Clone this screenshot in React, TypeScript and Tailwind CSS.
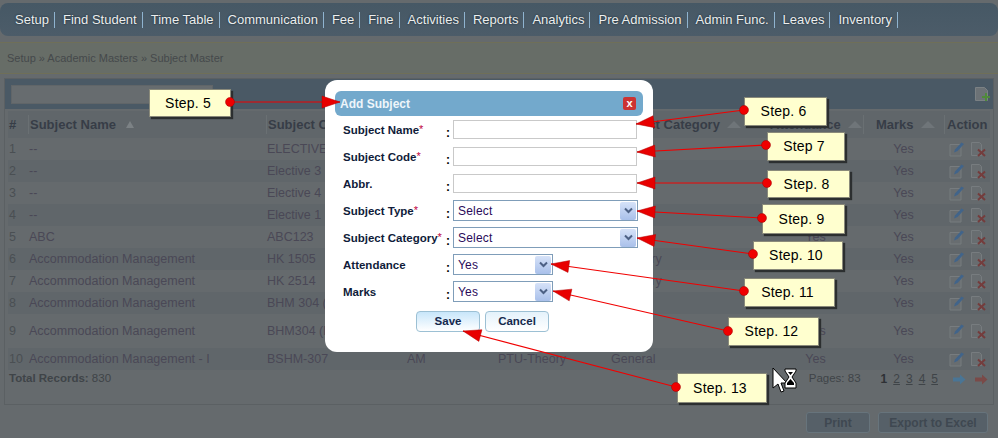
import React from "react";

const navItems = ["Setup", "Find Student", "Time Table", "Communication", "Fee", "Fine", "Activities", "Reports", "Analytics", "Pre Admission", "Admin Func.", "Leaves", "Inventory"];

const rows = [
  { n: "1", name: "--", code: "ELECTIVE", abbr: "", type: "", cat: "", att: "", h: "h-[22px]" },
  { n: "2", name: "--", code: "Elective 3", abbr: "", type: "", cat: "", att: "", h: "h-[22px]" },
  { n: "3", name: "--", code: "Elective 4", abbr: "", type: "", cat: "", att: "", h: "h-[22px]" },
  { n: "4", name: "--", code: "Elective 1", abbr: "", type: "", cat: "", att: "", h: "h-[22px]" },
  { n: "5", name: "ABC", code: "ABC123", abbr: "", type: "", cat: "", att: "Yes", h: "h-[22px]" },
  { n: "6", name: "Accommodation Management", code: "HK 1505", abbr: "", type: "", cat: "Category", att: "", h: "h-[22px]" },
  { n: "7", name: "Accommodation Management", code: "HK 2514", abbr: "", type: "", cat: "Category", att: "", h: "h-[22px]" },
  { n: "8", name: "Accommodation Management", code: "BHM 304 (", abbr: "", type: "", cat: "", att: "", h: "h-[22px]" },
  { n: "9", name: "Accommodation Management", code: "BHM304 (F", abbr: "", type: "", cat: "", att: "Yes", h: "h-[34px]" },
  { n: "10", name: "Accommodation Management - I", code: "BSHM-307", abbr: "AM", type: "PTU-Theory", cat: "General", att: "Yes", h: "h-[22px]" },
];

const callouts = [
  { label: "Step. 5", box: "left-[149px] top-[89px] w-[82px] h-[28px]" },
  { label: "Step. 6", box: "left-[744px] top-[97px] w-[83px] h-[29px]" },
  { label: "Step 7", box: "left-[767px] top-[132px] w-[78px] h-[29px]" },
  { label: "Step. 8", box: "left-[767px] top-[170px] w-[83px] h-[28px]" },
  { label: "Step. 9", box: "left-[762px] top-[204px] w-[83px] h-[30px]" },
  { label: "Step. 10", box: "left-[753px] top-[241px] w-[90px] h-[29px]" },
  { label: "Step. 11", box: "left-[744px] top-[278px] w-[91px] h-[29px]" },
  { label: "Step. 12", box: "left-[728px] top-[317px] w-[91px] h-[29px]" },
  { label: "Step. 13", box: "left-[677px] top-[373px] w-[90px] h-[30px]" },
];

// dot x, dot y, tip x, tip y
const arrows = [
  [230, 102, 340, 102],
  [744, 110, 636, 124],
  [766, 145, 637, 152],
  [767, 183, 637, 183],
  [762, 218, 637, 211],
  [753, 254, 637, 238],
  [744, 291, 551, 264],
  [728, 331, 553, 291],
  [676, 387, 463, 331],
];

function Arrow({ a }: { a: number[] }) {
  const [x1, y1, x2, y2] = a;
  const len = Math.hypot(x1 - x2, y1 - y2);
  const ux = (x1 - x2) / len;
  const uy = (y1 - y2) / len;
  const bx = x2 + ux * 18;
  const by = y2 + uy * 18;
  const pts = `${x2},${y2} ${bx - uy * 6},${by + ux * 6} ${bx + uy * 6},${by - ux * 6}`;
  return (
    <g>
      <line x1={x1} y1={y1} x2={x2} y2={y2} stroke="#f00000" strokeWidth="1.2" />
      <polygon points={pts} fill="#e80000" stroke="#b00000" strokeWidth="0.5" />
      <circle cx={x1} cy={y1} r="4.5" fill="#f00000" stroke="#a00000" strokeWidth="0.5" />
    </g>
  );
}

function EditIcon() {
  return (
    <svg width="16" height="16" viewBox="0 0 16 16">
      <path d="M1 3.500h11v11.500h-11z" fill="#686d70" stroke="#777c7f" />
      <path d="M5 11.500l1-3 6.500-7 2.500 1.500-6.500 7z" fill="#41648a" />
    </svg>
  );
}

function DeleteIcon() {
  return (
    <svg width="16" height="16" viewBox="0 0 16 16">
      <path d="M1.500 1.500h8l2 2v11h-10z" fill="#686d70" stroke="#777c7f" />
      <path d="M8 8.500l7 6.500M15 8.500l-7 6.500" stroke="#743c3c" strokeWidth="2" />
    </svg>
  );
}

function PageArrow({ color }: { color: string }) {
  return (
    <svg width="13" height="11" viewBox="0 0 13 11">
      <path d="M0 3.500h7v-3l5.500 5-5.500 5v-3h-7z" fill={color} />
    </svg>
  );
}

function SortMark() {
  return <span className="ml-[7px] inline-block border-x-[7px] border-b-[7px] border-x-transparent border-b-[#6f7579]" />;
}

function Chevron() {
  return (
    <span className="flex h-[18px] w-[16px] items-center justify-center rounded-[2px] bg-gradient-to-b from-[#d6e2f8] to-[#a9c0ea]">
      <svg width="9" height="7" viewBox="0 0 9 7">
        <path d="M1 1.500l3.500 3.500L8 1.500" fill="none" stroke="#4d6185" strokeWidth="2" />
      </svg>
    </span>
  );
}

function FieldLabel({ text, required }: { text: string; required?: boolean }) {
  return (
    <div className="flex w-[102px] items-start whitespace-nowrap text-[11.5px] font-bold leading-[14px] text-[#101c3a]">
      {text}
      {required && <span className="text-[11px] font-normal leading-[12px] text-[#c00040]">*</span>}
    </div>
  );
}

function TextRow({ label, required }: { label: string; required?: boolean }) {
  return (
    <div className="flex h-[27px] items-start pl-[18px]">
      <div className="mt-[3px]"><FieldLabel text={label} required={required} /></div>
      <span className="mt-[6px] w-[7px] pl-[1px] text-[12px] font-bold leading-[14px] text-black">:</span>
      <div className="ml-[1px] h-[19px] w-[184px] border border-[#c9c9c9] bg-white" />
    </div>
  );
}

function SelectRow({ label, value, required, small }: { label: string; value: string; required?: boolean; small?: boolean }) {
  return (
    <div className="flex h-[27px] items-start pl-[18px]">
      <div className="mt-[3px]"><FieldLabel text={label} required={required} /></div>
      <span className="mt-[6px] w-[7px] pl-[1px] text-[12px] font-bold leading-[14px] text-black">:</span>
      <div className={`-mt-[1px] ml-[1px] flex h-[21px] items-center justify-between border border-[#7f9db9] bg-white pl-[4px] pr-[1px] text-[12px] tracking-[0.2px] text-[#2a0a5a] ${small ? "w-[100px]" : "w-[185px]"}`}>
        {value}
        <Chevron />
      </div>
    </div>
  );
}

export default function App() {
  return (
    <div className="relative h-[438px] w-[998px] overflow-hidden bg-[#656a6d] font-['Liberation_Sans',Arial,sans-serif]">
      <nav className="mt-[3px] flex h-[33px] items-center rounded-[8px] bg-gradient-to-b from-[#465865] to-[#4c5c69] pl-[7px] text-[13px] text-[#eceeee] [text-shadow:0_0_2px_#10202c]">
        {navItems.map((item) => (
          <span key={item} className="h-[16px] border-r border-[#8fb3cf] pl-[8px] pr-[5px] leading-[16px]">{item}</span>
        ))}
      </nav>

      <div className="mt-[6px] flex h-[32px] items-center border-y border-[#6f6f58] bg-[#676d67] pl-[7px] text-[11px] text-[#45494b]">
        Setup » Academic Masters » Subject Master
      </div>

      <section className="mx-[4px] mt-[4px] h-[327px] border border-[#5b6063]">
        <div className="flex h-[30px] items-center justify-between bg-[#4a5965] pl-[6px] pr-[3px]">
          <div className="h-[19px] w-[202px] border border-[#606568] bg-[#676c6f]" />
          <svg width="16" height="16" viewBox="0 0 16 16">
            <path d="M1.500 1.500h9l3 3v10h-12z" fill="#6c7276" stroke="#7b8184" />
            <path d="M12 7v8M8 11h8" stroke="#4f8a3a" strokeWidth="2" />
          </svg>
        </div>

        <div className="mx-[3px] mt-[2px]">
          <div className="flex h-[27px] items-center bg-[#60666a] text-[13px] font-bold text-[#373d47]">
            <div className="w-[20px] pl-[1px]">#</div>
            <div className="flex w-[238px] items-center border-l border-[#6a7073] pl-[1px]">
              Subject Name
              <span className="ml-[10px] inline-block border-x-[4px] border-b-[7px] border-x-transparent border-b-[#7c8285]" />
            </div>
            <div className="w-[139px] border-l border-[#6a7073] pl-[1px]">Subject Code</div>
            <div className="w-[92px]" />
            <div className="w-[113px]" />
            <div className="flex w-[158px] items-center whitespace-nowrap pl-[3px]">Subject Category<SortMark /></div>
            <div className="flex w-[95px] items-center pl-[2px]">Attendance<SortMark /></div>
            <div className="flex w-[81px] items-center border-l border-[#6a7073] pl-[12px]">Marks<SortMark /></div>
            <div className="border-l border-[#6a7073] pl-[2px]">Action</div>
          </div>

          {rows.map((r, i) => (
            <div key={r.n} className={`flex items-center text-[12.5px] text-[#4a4856] ${r.h} ${i % 2 === 0 ? "" : "bg-[#60666a]"}`}>
              <div className="w-[20px] pl-[1px] text-[#4a4f53]">{r.n}</div>
              <div className="w-[238px] pl-[1px]">{r.name}</div>
              <div className="w-[139px] pl-[1px]">{r.code}</div>
              <div className="w-[92px] pl-[2px]">{r.abbr}</div>
              <div className="w-[113px] pl-[1px]">{r.type}</div>
              <div className="w-[158px] pl-[1px]">{r.cat}</div>
              <div className="w-[95px] text-center">{r.att}</div>
              <div className="w-[81px] text-center">Yes</div>
              <div className="flex gap-[5px] pl-[5px]"><EditIcon /><DeleteIcon /></div>
            </div>
          ))}

          <div className="flex h-[18px] items-center justify-between text-[11.5px] text-[#3f4448]">
            <div className="pl-[1px]"><b>Total Records:</b> 830</div>
            <div className="flex items-center pr-[2px]">
              <span>Pages: 83</span>
              <span className="ml-[20px] flex gap-[6px] text-[12px]">
                <span className="font-bold text-[#2e3135]">1</span>
                {["2", "3", "4", "5"].map((p) => <span key={p} className="underline">{p}</span>)}
              </span>
              <span className="ml-[15px]"><PageArrow color="#4a7595" /></span>
              <span className="ml-[9px]"><PageArrow color="#7a4a48" /></span>
            </div>
          </div>
        </div>
      </section>

      <div className="mt-[7px] flex justify-end gap-[8px] pr-[10px] text-[12px] font-bold text-[#3f4851]">
        <div className="flex h-[21px] w-[64px] items-center justify-center rounded-[3px] border border-[#67747c] bg-[#566068]">Print</div>
        <div className="flex h-[21px] w-[110px] items-center justify-center rounded-[3px] border border-[#67747c] bg-[#566068]">Export to Excel</div>
      </div>

      {/* popup */}
      <div className="absolute left-[325px] top-[80px] h-[272px] w-[328px] rounded-[12px] bg-white pt-[11px]">
        <div className="mx-[10px] mb-[4px] flex h-[25px] items-center justify-between rounded-[6px] bg-[#73a9cc] pl-[5px] pr-[7px] text-[12px] font-bold text-[#eef5fa]">
          Add Subject
          <span className="flex h-[13px] w-[13px] items-center justify-center rounded-[2px] bg-[#cc3333] text-[11px] leading-none text-white">x</span>
        </div>
        <TextRow label="Subject Name" required />
        <TextRow label="Subject Code" required />
        <TextRow label="Abbr." />
        <SelectRow label="Subject Type" value="Select" required />
        <SelectRow label="Subject Category" value="Select" required />
        <SelectRow label="Attendance" value="Yes" small />
        <SelectRow label="Marks" value="Yes" small />
        <div className="mt-[2px] flex justify-center gap-[5px] pr-[13px] text-[11.5px] font-bold text-[#14284c]">
          <div className="flex h-[21px] w-[64px] items-center justify-center rounded-[4px] border border-[#9cc0d4] bg-gradient-to-b from-[#c8e6fa] to-white">Save</div>
          <div className="flex h-[21px] w-[64px] items-center justify-center rounded-[4px] border border-[#9cc0d4] bg-gradient-to-b from-[#e4f2fb] to-white">Cancel</div>
        </div>
      </div>

      {/* step callouts */}
      {callouts.map((c) => (
        <div key={c.label} className={`absolute flex items-center justify-center border border-[#8a8a7a] bg-[#ffffcf] pr-[4px] text-[14px] tracking-[0.2px] text-black shadow-[2px_2px_1px_#2c2f30] ${c.box}`}>
          {c.label}
        </div>
      ))}

      <svg className="absolute left-0 top-0" width="998" height="438">
        {arrows.map((a) => <Arrow key={a[0]} a={a} />)}
        {/* busy cursor */}
        <path d="M773 368v20l5-4 3 8 3-1-3-8h6z" fill="#fff" stroke="#000" />
        <path d="M785 369h11v2l-4 6 4 6v5h-11v-5l4-6-4-6z" fill="#fff" stroke="#000" />
        <path d="M787 385h7v-2l-3.500-4-3.500 4zM788 372h5l-2.500 3z" fill="#000" />
      </svg>
    </div>
  );
}
